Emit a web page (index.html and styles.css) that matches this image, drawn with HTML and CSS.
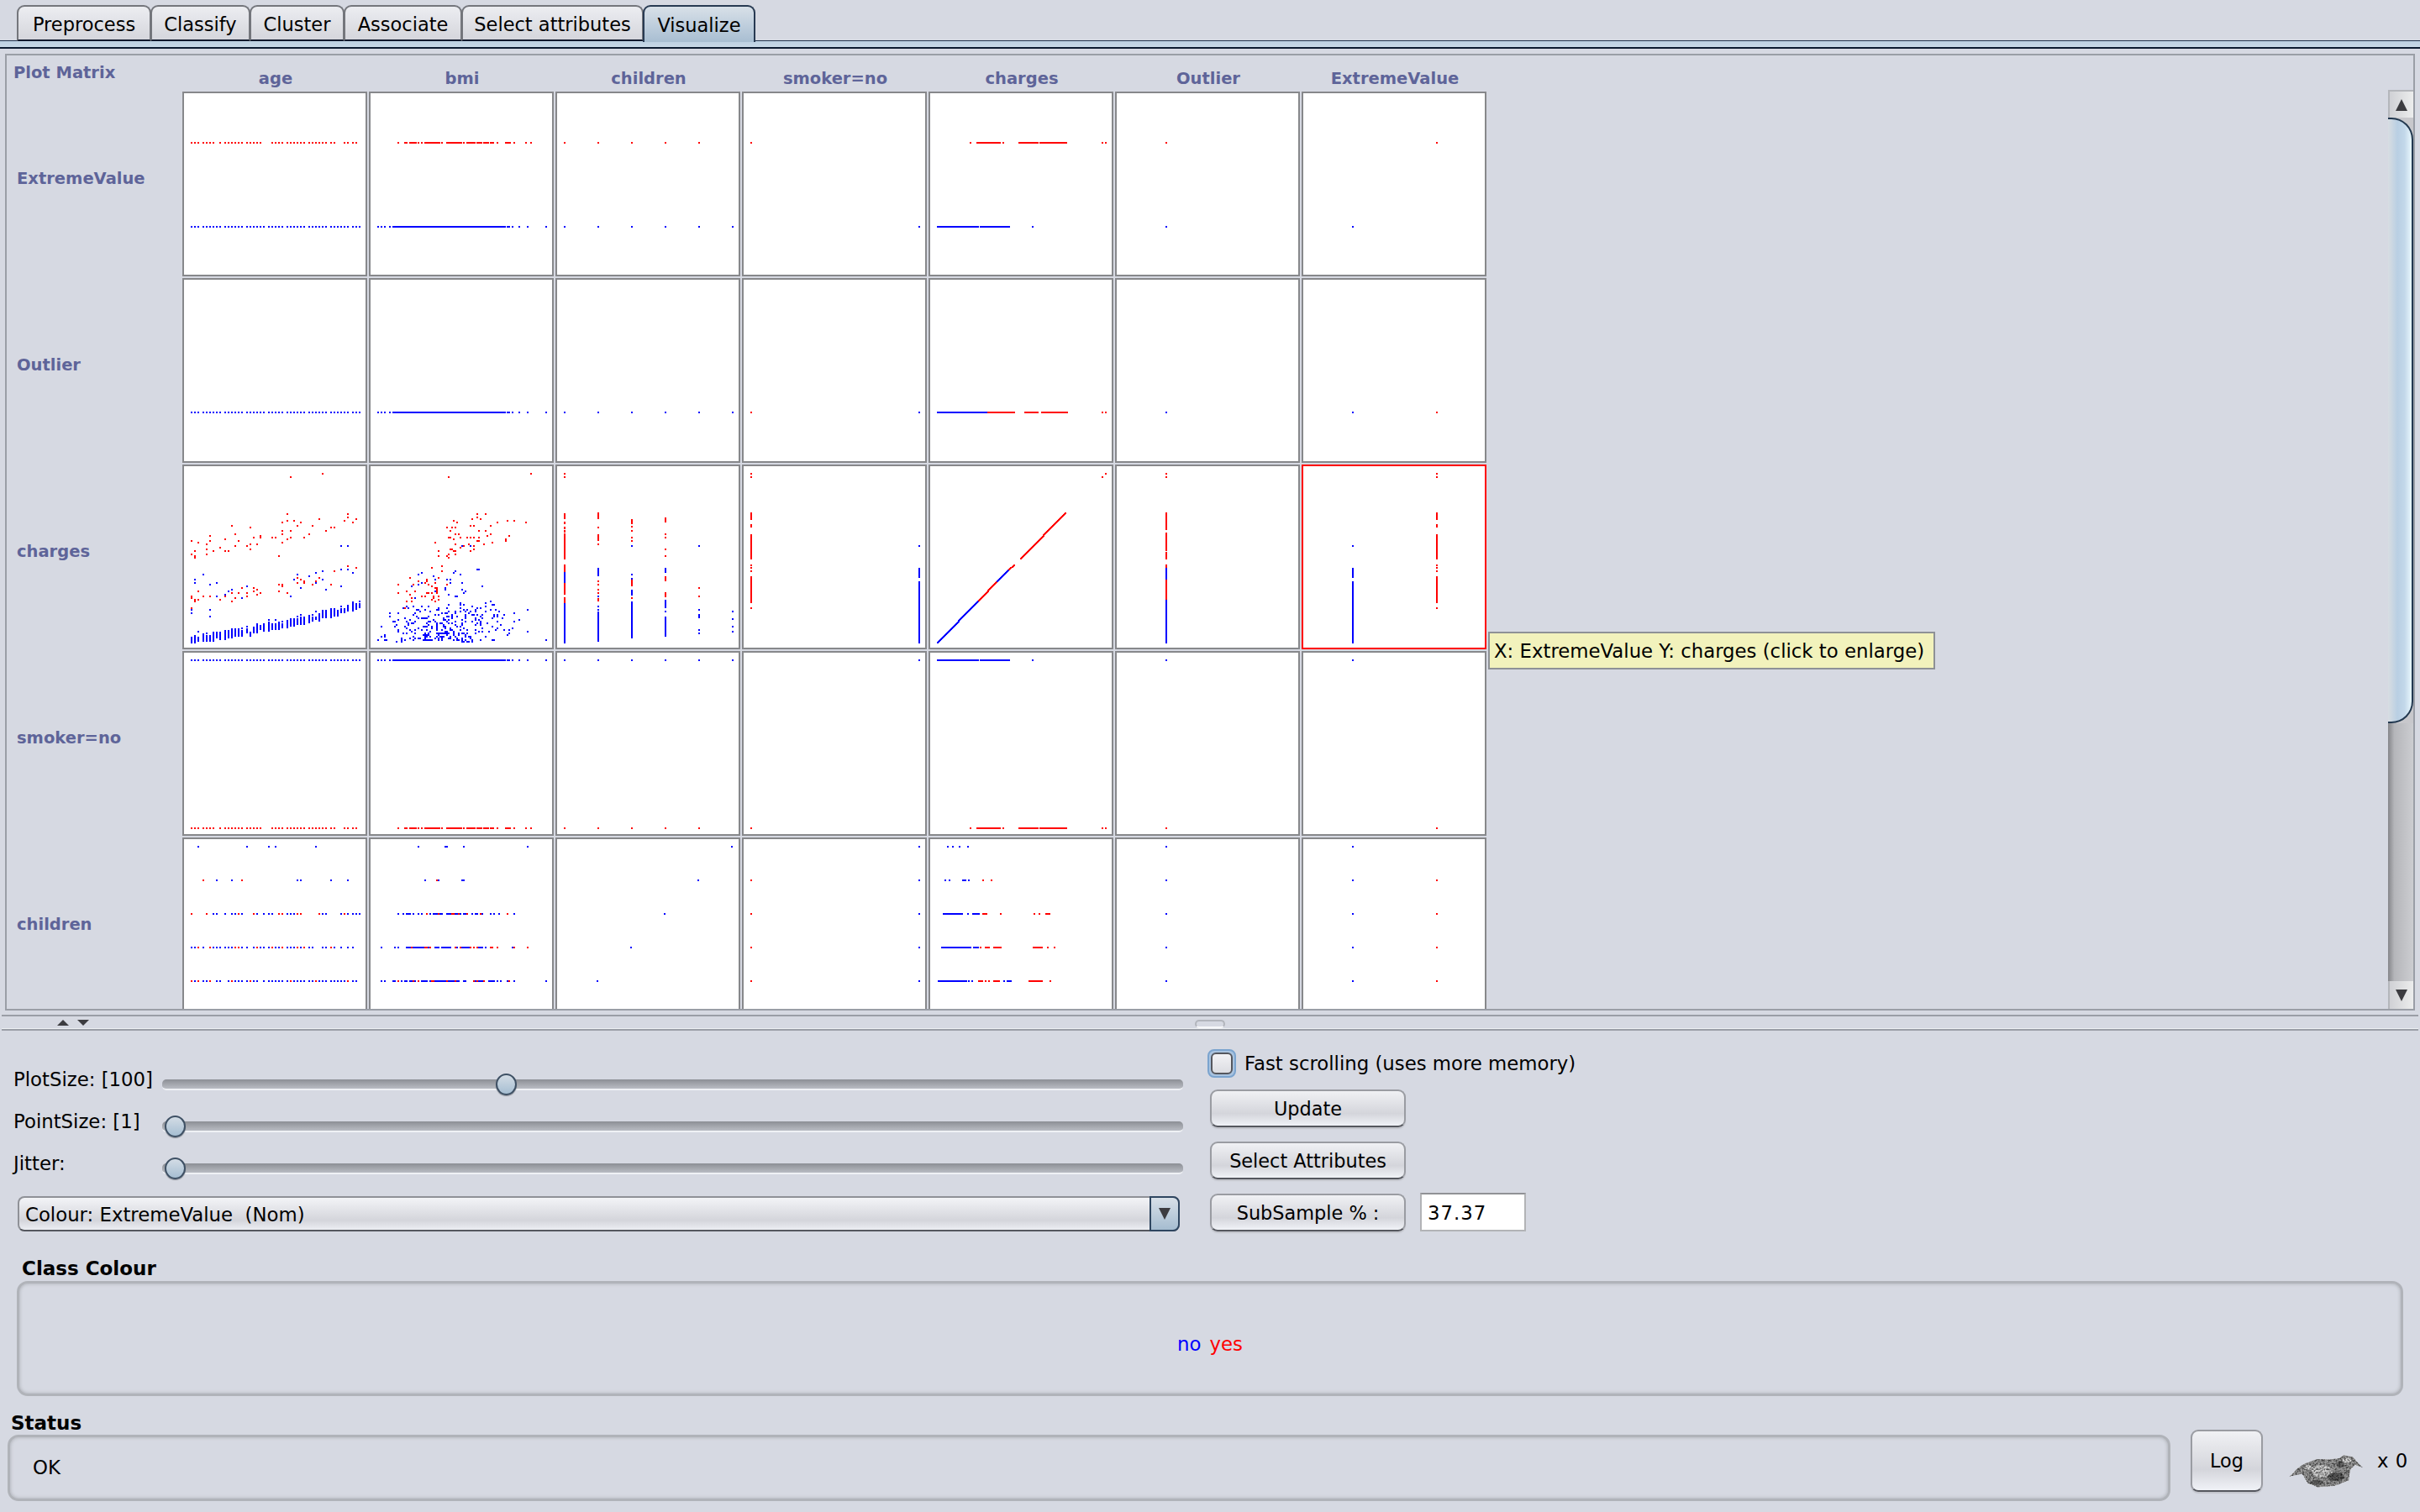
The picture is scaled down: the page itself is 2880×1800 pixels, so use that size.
FILE: index.html
```html
<!DOCTYPE html>
<html lang="en">
<head>
  <meta charset="UTF-8">
  <title>Weka Explorer - Visualize</title>
  <link rel="stylesheet" href="styles.css">
</head>
<body>

<div class="tabs">
  <div class="tab tab-preprocess">Preprocess</div>
  <div class="tab tab-classify">Classify</div>
  <div class="tab tab-cluster">Cluster</div>
  <div class="tab tab-associate">Associate</div>
  <div class="tab tab-select">Select attributes</div>
  <div class="tab tab-visualize active">Visualize</div>
</div>
<div class="tab-band"></div>

<div class="plot-panel">
  <div class="matrix-view">
    <div class="matrix" id="matrix"></div>
  </div>
  <div class="scrollbar">
    <div class="scroll-btn scroll-up"><span class="arrow-up"></span></div>
    <div class="scroll-thumb"></div>
    <div class="scroll-track"></div>
    <div class="scroll-btn scroll-down"><span class="arrow-down"></span></div>
  </div>
  <div class="tooltip">X: ExtremeValue Y: charges (click to enlarge)</div>
</div>

<div class="divider">
  <span class="split-up"></span>
  <span class="split-down"></span>
  <span class="grip"></span>
</div>

<div class="controls">
  <div class="controls-left">
    <div class="slider-row">
      <label>PlotSize: [100]</label>
      <div class="slider"><span class="thumb" style="left: 33.7%"></span></div>
    </div>
    <div class="slider-row">
      <label>PointSize: [1]</label>
      <div class="slider"><span class="thumb" style="left: 1.2%"></span></div>
    </div>
    <div class="slider-row">
      <label>Jitter:</label>
      <div class="slider"><span class="thumb" style="left: 1.2%"></span></div>
    </div>
    <div class="combo">
      <span class="combo-text">Colour: ExtremeValue&nbsp; (Nom)</span>
      <span class="combo-arrow"><span class="arrow-down"></span></span>
    </div>
  </div>
  <div class="controls-right">
    <div class="check-row">
      <span class="checkbox"><span class="check-inner"></span></span>
      <span>Fast scrolling (uses more memory)</span>
    </div>
    <button class="btn">Update</button>
    <button class="btn">Select Attributes</button>
    <div class="sample-row">
      <button class="btn">SubSample % :</button>
      <div class="sample-input">37.37</div>
    </div>
  </div>
</div>

<div class="section-title class-title">Class Colour</div>
<div class="class-box">
  <span class="class-no">no</span>
  <span class="class-yes">yes</span>
</div>

<div class="status">
  <div class="status-left">
    <div class="section-title">Status</div>
    <div class="status-box">OK</div>
  </div>
  <button class="btn log-btn">Log</button>
  <svg class="bird" viewBox="660 270 290 130">
    <defs>
      <filter id="fur" color-interpolation-filters="sRGB" x="0" y="0" width="100%" height="100%">
        <feTurbulence type="fractalNoise" baseFrequency="0.16" numOctaves="2" seed="4"/>
        <feColorMatrix values="1.6 0 0 0 0  1.6 0 0 0 0  1.6 0 0 0 0  0 0 0 0 1" result="noise"/>
        <feBlend in="SourceGraphic" in2="noise" mode="multiply"/>
        <feComposite in2="SourceAlpha" operator="in"/>
      </filter>
    </defs>
    <g filter="url(#fur)">
      <path fill="#9a9a9a" d="M672 355 L700 325 L725 308 L770 291 L820 292 L850 288 L868 277 L900 283 L918 303 L937 322 L908 312 L892 330 L886 368 L835 388 L775 393 L738 378 L718 345 L690 350 Z"/>
      <ellipse cx="790" cy="335" rx="38" ry="22" fill="#d0d0d0"/>
      <ellipse cx="740" cy="322" rx="16" ry="8" fill="#d4d4d4"/>
      <ellipse cx="880" cy="295" rx="16" ry="9" fill="#dcdcdc"/>
      <ellipse cx="840" cy="355" rx="30" ry="16" fill="#5c5c5c"/>
      <ellipse cx="770" cy="375" rx="24" ry="9" fill="#666"/>
      <ellipse cx="855" cy="310" rx="14" ry="12" fill="#666"/>
    </g>
  </svg>
  <span class="bird-count">x 0</span>
</div>

<script src="script.js"></script>
</body>
</html>
```

FILE: styles.css
```css
html, body {
  margin: 0;
  padding: 0;
}

body {
  width: 2880px;
  height: 1800px;
  overflow: hidden;
  background-color: #d6d9e2;
  font-family: "DejaVu Sans", sans-serif;
  font-size: 22.8px;
  color: #000;
}

/* Tabs */
.tabs {
  display: flex;
  height: 43px;
  padding: 6px 0 0 20px;
  border-bottom: 0;
}

.tab {
  display: flex;
  align-items: center;
  justify-content: center;
  box-sizing: border-box;
  height: 43px;
  padding-top: 2px;
  font-size: 22.5px;
  background: linear-gradient(#eceDf1, #d5d6dc);
  border: 2px solid #74767c;
  border-bottom: 2px solid #10182c;
  border-radius: 9px 9px 0 0;
  margin-right: -1px;
}

.tab-preprocess { width: 160px; }
.tab-classify { width: 119px; }
.tab-cluster { width: 113px; }
.tab-associate { width: 141px; }
.tab-select { width: 217px; }
.tab-visualize { width: 134px; }

.tab.active {
  background: linear-gradient(#d8e0e8, #a8bed2);
  border-color: #283a52;
  border-bottom: 0;
  height: 44px;
}

.tab-band {
  height: 7px;
  background: linear-gradient(#bcd0e2, #c8d8e6);
  border-top: 1px solid #24344e;
  margin-top: -1px;
  border-bottom: 2px solid #0c1a30;
}

/* Plot matrix */
.plot-panel {
  position: relative;
  display: flex;
  height: 1135px;
  margin: 6px 6px 0;
  border: 2px solid #9a9ea6;
}

.matrix-view {
  flex: 1;
  overflow: hidden;
}

.matrix {
  display: grid;
  grid-template-columns: 207px repeat(7, 220px);
  grid-auto-rows: 220px;
  grid-template-rows: 41px;
  gap: 2px;
}

.matrix-label {
  color: #5e6499;
  font-weight: bold;
  font-size: 19.5px;
}

.corner-label {
  padding: 9px 0 0 8px;
}

.col-label {
  text-align: center;
  padding-top: 16px;
  padding-left: 2px;
}

.row-label {
  display: flex;
  align-items: center;
  padding: 0 0 14px 12px;
}

.cell {
  box-sizing: border-box;
  background: #fff;
  border: 2px solid #87888b;
}

.cell canvas {
  display: block;
}

.cell.hover {
  border-color: #f00;
}

.tooltip {
  position: absolute;
  left: 1763px;
  top: 686px;
  box-sizing: border-box;
  width: 532px;
  height: 45px;
  line-height: 43px;
  padding-left: 5px;
  white-space: nowrap;
  background: #f2f2bc;
  border: 2px solid #8e9196;
}

/* Scrollbar */
.scrollbar {
  display: flex;
  flex-direction: column;
  width: 30px;
  margin-top: 41px;
  background: #c8c8cc;
}

.scroll-btn {
  display: flex;
  align-items: center;
  justify-content: center;
  height: 33px;
  background: linear-gradient(90deg, #d0d1d5, #eceded);
}

.scroll-up {
  border-top: 2px solid #b4b6bb;
  border-left: 2px solid #b4b6bb;
  box-sizing: border-box;
}

.scroll-down {
  border-left: 2px solid #b4b6bb;
  box-sizing: border-box;
}

.scroll-thumb {
  height: 721px;
  box-sizing: border-box;
  background: linear-gradient(90deg, #d8dde2, #b9cfe3 40%, #c3d8ea 70%, #e8f7fd);
  border-right: 2px solid #22384f;
  border-top: 2px solid #22384f;
  border-bottom: 2px solid #22384f;
  border-radius: 0 26px 26px 0;
}

.scroll-track {
  flex: 1;
  background: linear-gradient(90deg, #85868a, #b5b6ba 25%, #cccdd1);
}

.arrow-up {
  width: 0;
  height: 0;
  border-left: 7px solid transparent;
  border-right: 7px solid transparent;
  border-bottom: 14px solid #3c3c40;
}

.arrow-down {
  width: 0;
  height: 0;
  border-left: 7px solid transparent;
  border-right: 7px solid transparent;
  border-top: 14px solid #3c3c40;
}

/* Split pane divider */
.divider {
  position: relative;
  box-sizing: border-box;
  height: 19px;
  margin: 5px 2px 0;
  border-top: 2px solid #9a9ea6;
  border-bottom: 2px solid #9a9ea6;
  box-shadow: inset 0 -1px 0 #eef0f4;
}

.split-up {
  position: absolute;
  left: 66px;
  top: 4px;
  border-left: 7px solid transparent;
  border-right: 7px solid transparent;
  border-bottom: 7px solid #3c3c40;
}

.split-down {
  position: absolute;
  left: 90px;
  top: 4px;
  border-left: 7px solid transparent;
  border-right: 7px solid transparent;
  border-top: 7px solid #3c3c40;
}

.grip {
  position: absolute;
  left: 1420px;
  top: 4px;
  box-sizing: border-box;
  width: 36px;
  height: 10px;
  border: 2px solid #b2b5bc;
  border-bottom-color: #f6f7f9;
  border-radius: 6px;
}

/* Sliders, combo, buttons */
.controls {
  display: flex;
  align-items: flex-end;
  padding: 23px 0 0 16px;
}

.controls-left {
  width: 1392px;
}

.slider-row {
  display: flex;
  align-items: center;
  height: 50px;
}

.slider-row label {
  width: 177px;
  padding-bottom: 12px;
}

.slider {
  position: relative;
  flex: 1;
  height: 11px;
  background: linear-gradient(#8c8f95, #b9bcc3);
  border-radius: 5px;
  border-bottom: 2px solid #eff1f5;
}

.thumb {
  position: absolute;
  top: -7px;
  box-sizing: border-box;
  width: 25px;
  height: 26px;
  margin-left: -12px;
  background: linear-gradient(#d3dce5, #a6bed2);
  border: 2px solid #3e5064;
  border-radius: 50%;
  box-shadow: 0 1px 1px #8e9198;
}

.combo {
  display: flex;
  box-sizing: border-box;
  height: 42px;
  margin: 8px 4px 0 5px;
  background: linear-gradient(#f3f4f7, #d4d5db 70%, #eceef3);
  border: 2px solid #8f9197;
  border-bottom-color: #55575e;
  border-radius: 8px;
}

.combo-text {
  flex: 1;
  padding-left: 7px;
  line-height: 40px;
}

.combo-arrow {
  display: flex;
  align-items: center;
  justify-content: center;
  width: 32px;
  margin: -2px -2px -2px 0;
  background: linear-gradient(#d8e0e8, #a5bcd0);
  border: 2px solid #2f4660;
  border-radius: 0 8px 8px 0;
}

.controls-right {
  display: flex;
  flex-direction: column;
  align-items: flex-start;
  margin-left: 29px;
}

.check-row {
  display: flex;
  align-items: center;
  gap: 10px;
  height: 32px;
  margin-bottom: 15px;
}

.checkbox {
  display: flex;
  box-sizing: border-box;
  width: 34px;
  height: 34px;
  padding: 2px;
  border: 2px solid #7ba4cf;
  border-radius: 8px;
  background: #a9c3df;
}

.check-inner {
  flex: 1;
  background: linear-gradient(#f2f2f5, #dcdde2);
  border: 2px solid #55575e;
  border-radius: 6px;
}

.btn {
  box-sizing: border-box;
  width: 233px;
  height: 45px;
  margin: 0 0 17px 3px;
  padding: 0;
  font: inherit;
  font-size: 22.4px;
  color: #000;
  background: linear-gradient(#f0f1f4, #d4d5db 65%, #f0f2f7);
  border: 2px solid #9a9ca2;
  border-bottom-color: #55575e;
  border-radius: 9px;
  box-shadow: 0 2px 1px #c2c4cb;
}

.sample-row {
  display: flex;
  align-items: flex-start;
}

.sample-row .btn {
  margin-bottom: 0;
}

.sample-input {
  box-sizing: border-box;
  width: 126px;
  height: 46px;
  margin: -1px 0 0 17px;
  padding-left: 7px;
  line-height: 44px;
  letter-spacing: 1px;
  background: #fff;
  border: 2px solid #b2b3b6;
  border-top-color: #909195;
}

/* Class colour and status */
.section-title {
  font-weight: bold;
  font-size: 23px;
  line-height: 26px;
}

.class-title {
  margin: 31px 0 2px 26px;
}

.class-box {
  display: flex;
  align-items: center;
  justify-content: center;
  gap: 10px;
  box-sizing: border-box;
  width: 2840px;
  height: 137px;
  margin-left: 20px;
  padding-top: 13px;
  border: 3px solid #b0b3b9;
  border-radius: 13px;
  box-shadow: inset 0 0 4px #a8abb1;
}

.class-no {
  color: #00f;
}

.class-yes {
  color: #f00;
}

.status {
  display: flex;
  align-items: flex-start;
  margin: 19px 0 0 9px;
}

.status-left {
  width: 2574px;
}

.status-left .section-title {
  margin: 0 0 1px 4px;
}

.status-box {
  box-sizing: border-box;
  height: 79px;
  padding-left: 27px;
  line-height: 73px;
  border: 3px solid #b0b3b9;
  border-radius: 13px;
  box-shadow: inset 0 0 4px #a8abb1;
}

.log-btn {
  flex: none;
  width: 86px;
  height: 74px;
  margin: 21px 0 0 24px;
}

.bird {
  flex: none;
  width: 97px;
  height: 43px;
  margin: 49px 0 0 27px;
}

.bird-count {
  margin: 45px 0 0 12px;
  letter-spacing: 0.5px;
}
```

FILE: script.js
```js
const R = "#f00";
const B = "#00f";

const ROWS = ["ExtremeValue", "Outlier", "charges", "smoker=no", "children"];
const COLS = ["age", "bmi", "children", "smoker=no", "charges", "Outlier", "ExtremeValue"];

// x positions of the points, in px from the cell's outer edge
const AGE_ALL = [11,15,19,25,29,33,37,41,45,51,55,59,63,67,71,77,81,85,89,93,97,103,107,111,115,119,125,129,133,137,141,145,151,155,159,163,167,171,177,181,185,189,193,197,203,207,211];
const AGE_RED = [11,15,19,25,29,33,37,45,51,55,59,63,67,71,77,81,85,89,93,107,111,115,119,125,129,133,137,141,145,151,155,159,163,167,171,177,181,193,197,203,207];
const BMI_BLUE = [11,15,19,25,[29,162],165,167,171,179,189,211];
const BMI_RED = [35,43,45,[49,56],59,63,[67,84],87,[93,110],113,[117,126],[129,134],[137,142],[145,148],153,[163,168],173,187,193];
const KIDS = [11,51,91,131,171,211];
const KIDS_RED = [11,51,91,131,171];
const CH_BLUE = [[11,59],[62,83],[85,96],124];
const CH_RED = [50,[58,85],89,[108,130],[133,164],207,211];

// vertical strips for the charges row
const SMOKER_RED = [11,15,[58,65],[72,74],[84,102],[104,112],120,123,127,[134,164],171];
const SMOKER_BLUE = [97,[124,134],[140,160],[162,212]];

const AGE_CHARGES_RED = [[167,11],[129,15],[125,59],[197,59],[197,63],[193,67],[203,69],[207,65],[163,65],[119,69],[125,67],[133,67],[137,73],[141,69],[155,73],[171,79],[177,75],[181,75],[119,79],[119,83],[129,79],[151,83],[145,87],[129,87],[125,89],[119,93],[115,109],[111,87],[107,87],[93,85],[93,87],[89,95],[85,87],[81,75],[81,95],[81,101],[77,97],[67,91],[63,83],[63,97],[59,73],[55,103],[51,103],[51,89],[45,99],[37,103],[33,85],[33,91],[29,95],[29,101],[29,107],[19,93],[11,91],[15,103],[11,107],[15,109],[15,111],
  [197,121],[207,123],[181,127],[163,135],[137,135],[141,137],[145,139],[145,141],[137,141],[159,139],[155,143],[177,143],[115,143],[119,143],[119,145],[115,151],[125,153],[85,147],[89,149],[85,151],[93,153],[89,155],[71,147],[77,153],[77,157],[67,153],[63,159],[59,153],[59,163],[51,157],[45,161],[33,157],[25,157],[19,151],[19,161],[15,161],[15,163],[11,157],[11,159],[11,171]];
const AGE_CHARGES_BLUE = [[189,97],[197,97],[167,127],[159,129],[189,125],[197,125],[203,129],[151,133],[137,131],[133,137],[167,137],[159,141],[141,147],[171,149],[189,145],[129,157],[77,145],[59,149],[55,151],[51,155],[71,159],[41,141],[33,143],[25,131],[15,137],[15,141],[41,157],[11,173],[11,177],[33,173],[33,181],
  [19,199],[29,201],[71,195],[77,193],[103,185],[111,185],[119,187],[137,181],[141,179],[155,179],[159,175],[189,169],[211,163]];
// the bottom band: [x, y1, y2, ...]
const AGE_CHARGES_BARS = [[11,206,212],[15,204,212],[19,206,210],[25,202,210],[29,204,210],[33,204,210],[37,200,210],[41,200,206],[45,200,208],[51,198,208],[55,198,206],[59,196,206],[63,196,204],[67,196,204],[71,198,204],[77,196,200],[81,200,204],[85,194,200],[89,190,194,196,200],[93,192,196],[97,190,198],[103,188,192,194,198],[107,190,196],[111,190,196],[115,188,196],[119,190,194],[125,186,194],[129,184,192],[133,184,192],[137,184,190],[141,182,190],[145,182,190],[151,180,188],[155,182,186],[159,182,184],[163,178,186],[167,174,182],[171,174,182],[177,172,182],[181,172,180],[185,174,180],[189,172,176],[193,172,176],[197,168,174],[203,164,168,170,174],[207,166,172],[211,166,170]];

const BMI_CHARGES_RED = [[193,11],[95,15],[139,59],[129,59],[129,63],[123,65],[133,65],[101,67],[105,69],[153,69],[165,67],[173,67],[187,69],[121,73],[125,73],[145,73],[93,75],[99,75],[103,75],[97,79],[131,79],[139,79],[103,83],[107,83],[145,83],[141,85],[167,85],[95,87],[97,87],[109,87],[117,87],[121,87],[125,87],[131,87],[101,89],[129,91],[131,91],[163,89],[163,91],[79,93],[147,93],[103,95],[119,95],[137,95],[113,97],[109,99],[125,97],[97,101],[99,101],[125,101],[101,103],[103,103],[121,103],[83,103],[95,107],[103,107],[93,109],[83,109],[95,111],
  [87,121],[75,123],[87,127],[49,135],[83,135],[59,139],[69,137],[69,139],[67,141],[71,143],[79,141],[35,143],[53,143],[75,145],[93,143],[79,147],[81,147],[81,149],[81,151],[81,153],[45,151],[55,151],[35,153],[49,155],[69,153],[71,153],[75,153],[63,157],[67,157],[77,157],[77,159],[83,157],[51,159],[75,161],[83,161],[45,163],[51,163],[79,163],[43,171]];
const BMI_CHARGES_BLUE = [[111,97],[121,97],[129,125],[131,125],[103,127],[101,129],[109,131],[63,129],[59,131],[77,133],[79,137],[93,137],[97,137],[63,141],[97,141],[111,141],[59,143],[51,145],[135,145],[91,147],[91,149],[111,149],[115,151],[113,153],[79,151],[95,155],[103,157],[105,157],[55,159]];
// the dense cloud, by y
const BMI_CLOUD = [
  [163,[145]],[165,[109,139]],[167,[95,109,113,147,149]],[169,[45,53,63,71,123,139]],
  [171,[41,47,83,93,109,129,133]],[173,[57,59,67,81,83,113,117,127,145,151,189]],
  [175,[61,73,95,103,109,115,121,127,139,155]],[177,[25,35,55,87,91,93,103,119,173]],
  [179,[53,79,83,99,115,123,125,129,135,149,153,161]],[181,[25,57,71,93,95,99,105,115,133,149,153]],
  [183,[43,59,63,65,67,69,89,99,115,127,135,147,159]],[185,[35,49,77,89,91,95,111,127,131,179]],
  [187,[29,31,45,55,71,73,79,93,103,115,123,133,153,173]],[189,[47,51,53,69,81,85,87,95,99,111,129,133,141]],
  [191,[33,47,71,81,89,103,111,127,133,157]],[193,[15,31,43,65,67,69,75,81,89,91,105,109,147]],
  [195,[45,59,75,81,91,97,113,135,153,171]],[197,[35,49,55,63,69,81,87,97,99,109,117,127,151,161,167]],
  [199,[35,51,73,91,93,101,131,135,143,189]],[201,[41,45,55,67,71,81,83,85,87,89,91,93,95,101,107,111,113,117,127,167]],
  [203,[19,65,67,69,71,83,93,101,107,115,165]],[205,[15,19,53,67,69,73,81,85,87,89,97,103,115,119,121,139]],
  [207,[39,49,55,59,61,67,79,83,87,95,97,105,111,121]],[209,[11,19,21,39,43,53,65,67,69,71,73,75,83,87,101,105,107,111,115,123,133,147,149,211]],
  [211,[33,39,111,113,117,119,123]]
];

function h(color, y, x) { return { color, y, x }; }
function v(color, x, y) { return { color, vx: x, vy: y }; }
function pts(color, list) { return { color, pts: list }; }

// every cell, rows top to bottom, same order as COLS
const CELLS = [
  [
    [h(R,61,AGE_RED), h(B,161,AGE_ALL)],
    [h(R,61,BMI_RED), h(B,161,BMI_BLUE)],
    [h(R,61,KIDS_RED), h(B,161,KIDS)],
    [pts(R,[[11,61]]), pts(B,[[211,161]])],
    [h(R,61,CH_RED), h(B,161,CH_BLUE)],
    [pts(R,[[61,61]]), pts(B,[[61,161]])],
    [pts(B,[[61,161]]), pts(R,[[161,61]])]
  ],
  [
    [h(B,160,AGE_ALL)],
    [h(B,160,BMI_BLUE)],
    [h(B,160,KIDS)],
    [pts(R,[[11,160]]), pts(B,[[211,160]])],
    [h(B,160,[[11,70]]), h(R,160,[[71,102],[115,130],[135,165],207,211])],
    [pts(B,[[61,160]])],
    [pts(B,[[61,160]]), pts(R,[[161,160]])]
  ],
  [
    [pts(R,AGE_CHARGES_RED), pts(B,AGE_CHARGES_BLUE), { color: B, bars: AGE_CHARGES_BARS }],
    [pts(R,BMI_CHARGES_RED), pts(B,BMI_CHARGES_BLUE)].concat(BMI_CLOUD.map(r => h(B,r[0],r[1]))),
    [
      v(R,11,[11,15,[59,64],[69,70],[75,76],[79,80],[83,103],[105,112],[120,128],[142,154],[159,164]]),
      v(B,11,[[129,140],[166,212]]),
      v(R,51,[[58,64],75,[84,90],95,139,143,149,153,[160,162]]),
      v(B,51,[[124,127],[129,132],157,169,173,[176,210]]),
      v(R,91,[[66,70],74,79,87,91,[138,144],159]),
      v(B,91,[97,131,136,[150,155],[164,170],[172,206]]),
      v(R,131,[[64,68],83,87,101,109,[134,138],[153,157]]),
      v(B,131,[[124,128],[162,170],175,[182,204]]),
      v(B,171,[97,173,[179,182],197,201]),
      v(R,171,[147,157]),
      v(B,211,[175,184,193,199])
    ],
    [v(R,11,SMOKER_RED), v(B,211,SMOKER_BLUE)],
    [{ color: B, line: [11,212,60,162] }, { color: R, line: [60,162,82,139] }, { color: B, line: [82,139,96,125] }, { color: R, line: [96,125,102,120] }, { color: R, line: [110,112,163,58] }, pts(R,[[207,15],[211,11]])],
    [v(R,61,[11,15,[58,77],[82,102],[105,112],[120,162]]), v(B,61,[[124,136],[162,212]])],
    [v(B,61,SMOKER_BLUE), v(R,161,SMOKER_RED)]
  ],
  [
    [h(B,11,AGE_ALL), h(R,211,AGE_RED)],
    [h(B,11,BMI_BLUE), h(R,211,BMI_RED)],
    [h(B,11,KIDS), h(R,211,KIDS_RED)],
    [pts(B,[[211,11]]), pts(R,[[11,211]])],
    [h(B,11,CH_BLUE), h(R,211,CH_RED)],
    [pts(B,[[61,11]]), pts(R,[[61,211]])],
    [pts(B,[[61,11]]), pts(R,[[161,211]])]
  ],
  [
    [
      h(B,11,[19,77,103,111,159]),
      h(R,51,[25,71]), h(B,51,[41,59,137,141,177,197]),
      h(R,91,[11,29,67,85,115,119,137,141,163,193]), h(B,91,[37,41,51,59,63,71,89,97,103,107,125,129,133,167,171,189,197,203,207,211]),
      h(R,131,[19,33,63,67,89,107,119,137,145,177]), h(B,131,[11,15,25,37,41,45,51,55,59,71,77,85,93,97,103,111,115,125,129,133,141,151,155,167,171,181,189,197,203]),
      h(R,171,[11,19,33,59,81,129,159,197]), h(B,171,[15,25,29,41,45,55,63,67,71,77,85,89,97,103,107,111,115,119,125,133,137,141,145,151,155,163,167,171,177,181,185,189,193,203,207])
    ],
    [
      h(B,11,[59,[91,93],113,189]),
      h(B,51,[67,83,[111,113]]), h(R,51,[81]),
      h(B,91,[35,41,[45,49],53,59,63,73,[77,81],[85,87],[93,97],[103,105],109,[113,115],123,[127,129],135,145,149,155,173]), h(R,91,[69,83,[99,101],107,117,133,165]),
      h(B,131,[15,31,35,[45,65],71,[79,83],[87,97],105,[111,120],[131,135],139,171]), h(R,131,[51,[67,69],73,103,109,121,125,129,[145,147],153,173,189]),
      h(B,171,[15,19,[29,31],39,[43,45],[49,51],55,[63,69],73,[79,91],[95,101],[105,107],[113,115],127,[131,135],[143,149],153,157,165,173,211]), h(R,171,[35,53,59,[75,77],93,103,125,129,137,167])
    ],
    [pts(B,[[210,11],[170,51],[130,91],[90,131],[50,171]])],
    [pts(R,[[11,51],[11,91],[11,131],[11,171]]), pts(B,[[211,11],[211,51],[211,91],[211,131],[211,171]])],
    [
      h(B,11,[23,29,37,47]),
      h(B,51,[20,25,[41,44],48]), h(R,51,[65,75]),
      h(B,91,[[18,40],47,[53,60]]), h(R,91,[[65,69],86,126,132,[140,144]]),
      h(B,131,[[16,50],[54,59]]), h(R,131,[62,[68,72],[78,86],[125,135],142,150]),
      h(B,171,[[12,45],48,52,90,[94,98]]), h(R,171,[[60,64],68,72,[78,84],[120,135],145])
    ],
    [v(B,61,[11,51,91,131,171])],
    [v(B,61,[11,51,91,131,171]), v(R,161,[51,91,131,171])]
  ]
];

// canvas sits inside the 2px cell border, points are 2x2
function drawLayer(ctx, layer) {
  ctx.fillStyle = layer.color;
  const dot = (x, y) => ctx.fillRect(x - 3, y - 3, 2, 2);

  if (layer.pts) {
    layer.pts.forEach(p => dot(p[0], p[1]));
  } else if (layer.x) {
    layer.x.forEach(a => {
      if (Array.isArray(a)) ctx.fillRect(a[0] - 3, layer.y - 3, a[1] - a[0] + 2, 2);
      else dot(a, layer.y);
    });
  } else if (layer.vy) {
    layer.vy.forEach(a => {
      if (Array.isArray(a)) ctx.fillRect(layer.vx - 3, a[0] - 3, 2, a[1] - a[0] + 2);
      else dot(layer.vx, a);
    });
  } else if (layer.bars) {
    layer.bars.forEach(b => {
      for (let i = 1; i < b.length; i += 2) {
        ctx.fillRect(b[0] - 3, b[i] - 3, 2, b[i + 1] - b[i] + 2);
      }
    });
  } else if (layer.line) {
    const [x1, y1, x2, y2] = layer.line;
    const steps = Math.abs(y2 - y1);
    for (let i = 0; i <= steps; i++) {
      dot(Math.round(x1 + (x2 - x1) * i / steps), y1 + (y2 - y1) * i / steps);
    }
  }
}

function addLabel(parent, text, cls) {
  const div = document.createElement("div");
  div.className = "matrix-label " + cls;
  div.textContent = text;
  parent.appendChild(div);
}

const matrix = document.getElementById("matrix");
addLabel(matrix, "Plot Matrix", "corner-label");
COLS.forEach(name => addLabel(matrix, name, "col-label"));

ROWS.forEach((rowName, r) => {
  addLabel(matrix, rowName, "row-label");
  COLS.forEach((colName, c) => {
    const cell = document.createElement("div");
    cell.className = "cell";
    if (rowName === "charges" && colName === "ExtremeValue") cell.classList.add("hover");
    const canvas = document.createElement("canvas");
    canvas.width = 216;
    canvas.height = 216;
    cell.appendChild(canvas);
    matrix.appendChild(cell);
    const ctx = canvas.getContext("2d");
    CELLS[r][c].forEach(layer => drawLayer(ctx, layer));
  });
});
```
